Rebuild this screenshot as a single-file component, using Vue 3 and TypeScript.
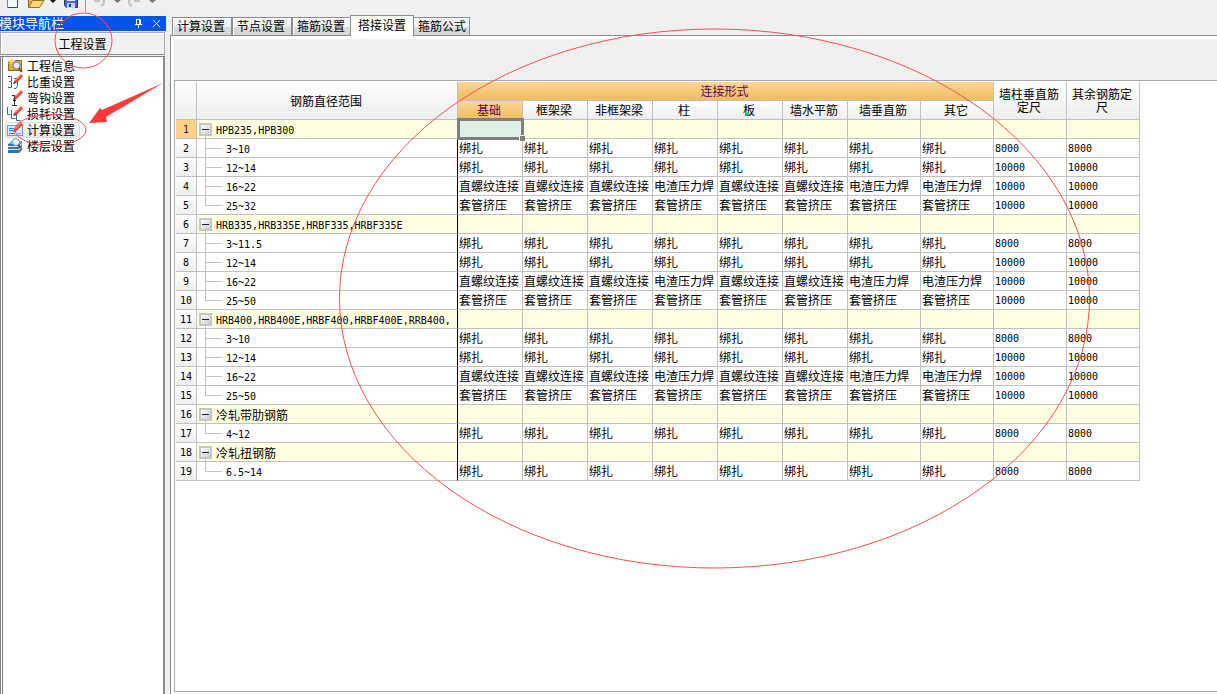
<script setup lang="ts">
import { ref } from 'vue'

interface GridRow {
  label: string
  group: boolean
  last?: boolean
  joints: string[]
  lengths: string[]
}

const modules = [
  { id: 'info', name: '工程信息' },
  { id: 'weight', name: '比重设置' },
  { id: 'hook', name: '弯钩设置' },
  { id: 'loss', name: '损耗设置' },
  { id: 'calc', name: '计算设置' },
  { id: 'floor', name: '楼层设置' },
]
const activeModule = ref('calc')

const tabs = ['计算设置', '节点设置', '箍筋设置', '搭接设置', '箍筋公式']
const activeTab = ref('搭接设置')

const jointColumns = ['基础', '框架梁', '非框架梁', '柱', '板', '墙水平筋', '墙垂直筋', '其它']

const T = '直螺纹连接'
const E = '电渣压力焊'
const lap = Array<string>(8).fill('绑扎')
const sleeve = Array<string>(8).fill('套管挤压')
const thread = [T, T, T, E, T, T, E, E]

const group = (label: string): GridRow => ({
  label,
  group: true,
  joints: Array<string>(8).fill(''),
  lengths: ['', ''],
})
const item = (label: string, joints: string[], length: string, last = false): GridRow => ({
  label,
  group: false,
  last,
  joints,
  lengths: [length, length],
})

const rows: GridRow[] = [
  group('HPB235,HPB300'),
  item('3~10', lap, '8000'),
  item('12~14', lap, '10000'),
  item('16~22', thread, '10000'),
  item('25~32', sleeve, '10000', true),
  group('HRB335,HRB335E,HRBF335,HRBF335E'),
  item('3~11.5', lap, '8000'),
  item('12~14', lap, '10000'),
  item('16~22', thread, '10000'),
  item('25~50', sleeve, '10000', true),
  group('HRB400,HRB400E,HRBF400,HRBF400E,RRB400,'),
  item('3~10', lap, '8000'),
  item('12~14', lap, '10000'),
  item('16~22', thread, '10000'),
  item('25~50', sleeve, '10000', true),
  group('冷轧带肋钢筋'),
  item('4~12', lap, '8000', true),
  group('冷轧扭钢筋'),
  item('6.5~14', lap, '8000', true),
]
</script>

<template>
  <div class="app">
    <header class="toolbar">
      <button class="tool" aria-label="新建">
        <svg width="20" height="9" viewBox="0 0 20 9">
          <path d="M7.500 -2V7.500H17.500V-2" fill="#f4f8fd" stroke="#6d86a6" />
          <path d="M17.500 0V7.500H8" fill="none" stroke="#2c4a73" />
        </svg>
      </button>
      <button class="tool" aria-label="打开">
        <svg width="38" height="9" viewBox="0 0 38 9">
          <path d="M8.500 7.500V-1H20V2" fill="#e8b64c" stroke="#94651a" />
          <path d="M8.500 7.500L12.500 0.500H24L19.500 7.500Z" fill="#ffd777" stroke="#9a6c1c" />
          <path d="M30 0H36L33 3Z" fill="#111" />
        </svg>
      </button>
      <button class="tool" aria-label="保存">
        <svg width="22" height="9" viewBox="0 0 22 9">
          <path d="M6.500 -2V5.500L8.500 7.500H19.500V-2" fill="#4468cf" stroke="#1d3491" />
          <rect x="9" y="-1" width="8" height="2" fill="#e8eefc" />
          <rect x="9" y="3" width="8" height="5" fill="#c9d4f3" />
          <rect x="11" y="4" width="2" height="3" fill="#1d3491" />
        </svg>
      </button>
      <span class="divider"></span>
      <button class="tool" aria-label="撤销">
        <svg width="38" height="8" viewBox="0 0 38 8">
          <path d="M8 1H14M16 -1C19 0 19 4 15 6" fill="none" stroke="#c4c4c4" stroke-width="2" />
          <path d="M28 0H35L31.500 3Z" fill="#777" />
        </svg>
      </button>
      <button class="tool" aria-label="恢复">
        <svg width="34" height="8" viewBox="0 0 34 8">
          <path d="M7 -1C4 0 4 4 8 6M10 1H16" fill="none" stroke="#c4c4c4" stroke-width="2" />
          <path d="M25 0H32L28.500 3Z" fill="#777" />
        </svg>
      </button>
    </header>

    <div class="body">
      <aside class="side">
        <div class="title">
          <span class="title-text">模块导航栏</span>
          <button class="title-btn" aria-label="固定">
            <svg width="9" height="9" viewBox="0 0 9 9">
              <path d="M2.500 5V0.500H6.500V5M5.500 0.500V5M1 5.500H8M4.500 6V9" fill="none" stroke="#fff" />
            </svg>
          </button>
          <button class="title-btn" aria-label="关闭">
            <svg width="9" height="9" viewBox="0 0 9 9">
              <path d="M1 1L8 8M8 1L1 8" fill="none" stroke="#fff" />
            </svg>
          </button>
        </div>
        <button class="section">工程设置</button>
        <nav class="modules">
          <button
            v-for="m in modules"
            :key="m.id"
            class="module"
            :class="{ active: m.id === activeModule }"
            @click="activeModule = m.id"
          >
            <svg class="module-icon" width="16" height="16" viewBox="0 0 16 16">
              <g v-if="m.id === 'info'">
                <path d="M1.500 3.500H7L8 2.500H14.500V12.500H1.500Z" fill="#d6b04a" stroke="#8a6a1c" />
                <path d="M4 0V7M0.500 3.500H7.500M1.500 1L6.500 6M6.500 1L1.500 6" stroke="#ffd21f" />
                <circle cx="9.500" cy="7.500" r="3.500" fill="#dcebfa" stroke="#6b7f99" />
                <path d="M12 10.500L15 14" stroke="#7a4c22" stroke-width="2" />
              </g>
              <g v-else-if="m.id === 'floor'">
                <path d="M1 6L4 3H15L12 6Z" fill="#7fb4e8" />
                <path
                  d="M1 6H12L15 3V5L12 8H1ZM1 9H12L15 6V8L12 11H1ZM1 12H12L15 9V12L12 15H1Z"
                  fill="#2f74b5"
                />
                <path d="M2 8.500H12L15 5.500M2 11.500H12L15 8.500" fill="none" stroke="#d8eafa" />
                <circle cx="9" cy="4" r="3.500" fill="#e6f1fb" stroke="#8697aa" />
                <path d="M11 7L14 10" stroke="#7a4c22" stroke-width="2" />
              </g>
              <g v-else>
                <path
                  v-if="m.id === 'weight'"
                  d="M1 2.500H4.500V13.500H1M2 7.500H4M7 4.500H10.500V12L9 14.500H7"
                  fill="none"
                  stroke="#3e6a9e"
                />
                <path
                  v-else-if="m.id === 'hook'"
                  d="M5 5.500H7.500V15M5 15.500H10M6 10.500H9"
                  fill="none"
                  stroke="#222"
                />
                <path
                  v-else-if="m.id === 'loss'"
                  d="M0.500 1V8.500H3.500M4.500 4V12.500H8.500M9.500 8V14.500H13.500"
                  fill="none"
                  stroke="#3e6a9e"
                />
                <template v-else>
                  <rect x="0.500" y="3.500" width="15" height="10" fill="#dceafd" stroke="#6f9bdc" />
                  <path d="M2 6.500H7M2 8.500H6M2 11.500H8" stroke="#3b78d8" />
                  <path d="M10 11.500H14" stroke="#7fa8e6" />
                </template>
                <path d="M7.500 6.500L14 0L16 2.500L9.500 9Z" fill="#ea4628" />
                <path d="M8.500 6.500L14.500 1" stroke="#ff9478" />
                <path d="M6 10L7.500 6.500L9.500 9Z" fill="#6a3020" />
              </g>
            </svg>
            <span class="module-name">{{ m.name }}</span>
          </button>
        </nav>
      </aside>

      <main class="main">
        <div class="tabs" role="tablist">
          <button
            v-for="t in tabs"
            :key="t"
            class="tab"
            :class="{ active: t === activeTab }"
            role="tab"
            :aria-selected="t === activeTab"
            @click="activeTab = t"
          >
            {{ t }}
          </button>
        </div>
        <section class="panel">
          <div class="strip"></div>
          <div class="grid-frame">
            <table class="grid">
              <colgroup>
                <col class="c-index" />
                <col class="c-name" />
                <col v-for="n in 6" :key="n" class="c-narrow" />
                <col v-for="n in 4" :key="n" class="c-wide" />
              </colgroup>
              <thead>
                <tr>
                  <th rowspan="2"></th>
                  <th rowspan="2">钢筋直径范围</th>
                  <th colspan="8" class="hot">连接形式</th>
                  <th rowspan="2" class="wrap">墙柱垂直筋定尺</th>
                  <th rowspan="2" class="wrap">其余钢筋定尺</th>
                </tr>
                <tr>
                  <th v-for="(c, i) in jointColumns" :key="c" :class="{ hot: i === 0 }">{{ c }}</th>
                </tr>
              </thead>
              <tbody>
                <tr v-for="(r, i) in rows" :key="i" :class="{ group: r.group }">
                  <th class="index" :class="{ current: i === 0 }" scope="row">{{ i + 1 }}</th>
                  <td class="name">
                    <div class="node">
                      <button v-if="r.group" class="toggle" aria-label="折叠"></button>
                      <span v-else class="branch" :class="{ last: r.last }"></span>
                      <span class="label">{{ r.label }}</span>
                    </div>
                  </td>
                  <td v-for="(j, k) in r.joints" :key="k" :class="{ selected: i === 0 && k === 0 }">{{ j }}</td>
                  <td v-for="(l, k) in r.lengths" :key="'l' + k" class="num">{{ l }}</td>
                </tr>
              </tbody>
            </table>
          </div>
        </section>
      </main>
    </div>

    <svg class="marks" width="1100" height="580" viewBox="0 0 1100 580" aria-hidden="true">
      <g fill="none" stroke="#f4504e">
        <ellipse cx="714.5" cy="298.5" rx="375" ry="269.5" />
        <ellipse cx="83.5" cy="40.500" rx="28.5" ry="27.500" />
        <ellipse cx="50.500" cy="130" rx="35.500" ry="15.500" />
      </g>
      <path d="M89 123L100 108L102 110L163 83L106 117L107 122Z" fill="#fe3b3a" />
    </svg>
  </div>
</template>

<style>
html,
body {
  overflow: hidden;
  background: #f0f0f0;
}
</style>

<style scoped>
.app {
  position: relative;
  display: flex;
  flex-direction: column;
  height: 100vh;
  overflow: hidden;
  background: #f0f0f0;
  color: #000;
  font: 12px/16px 'Liberation Sans', 'Noto Sans CJK SC', sans-serif;
}
.app * {
  box-sizing: border-box;
}
button {
  margin: 0;
  padding: 0;
  border: 0;
  background: none;
  color: inherit;
  font: inherit;
}
svg {
  display: block;
  flex: none;
}

.toolbar {
  display: flex;
  align-items: flex-start;
  flex: none;
  height: 14px;
}
.divider {
  width: 1px;
  height: 12px;
  margin-left: 5px;
  background: #999;
}

.body {
  display: flex;
  flex: 1;
  min-height: 0;
  gap: 4px;
}

.side {
  display: flex;
  flex-direction: column;
  flex: none;
  width: 166px;
  padding-top: 2px;
}
.title {
  display: flex;
  align-items: center;
  gap: 9px;
  height: 15px;
  padding-right: 5px;
  background: #0054e6;
  color: #fff;
  font-size: 13px;
}
.title-text {
  flex: 1;
  margin-left: -1px;
  white-space: nowrap;
}
.section {
  height: 23px;
  margin: 1px 1px 0 0;
  padding-top: 2px;
  border: 1px solid #a8a8a8;
  border-bottom-color: #8f8f8f;
  background: #f0f0f0;
  box-shadow: inset 1px 1px #fff;
}
.modules {
  display: flex;
  flex-direction: column;
  align-items: flex-start;
  flex: 1;
  margin: 1px 1px 0 0;
  padding: 1px 2px;
  border: 1px solid #7d7f86;
  border-left: 3px double #7d7f86;
  border-right: 2px solid #8b8b8f;
  border-bottom: 0;
  background: #fff;
}
.module {
  display: flex;
  align-items: center;
  gap: 4px;
  height: 16px;
  padding: 0 5px 0 2px;
  border-radius: 3px;
  white-space: nowrap;
}
.module-name {
  padding-top: 2px;
}
.module.active {
  background: linear-gradient(#fafafa, #e6e6e6);
  box-shadow: inset 0 0 0 1px #dadada;
}

.main {
  display: flex;
  flex-direction: column;
  flex: 1;
  min-width: 0;
  padding-top: 1px;
}
.tabs {
  display: flex;
  align-items: flex-end;
  height: 20px;
  padding-left: 2px;
}
.tab {
  height: 18px;
  padding: 1px 6px 0 4px;
  border: 1px solid #898c95;
  border-bottom: 0;
  background: linear-gradient(#f2f2f2 50%, #dedede 50%, #d4d4d4);
  box-shadow: inset 1px 1px #fcfcfc;
  white-space: nowrap;
}
.tab:last-child {
  padding: 1px 3px 0 5px;
}
.tab.active {
  position: relative;
  height: 21px;
  margin: 0 -2px -1px;
  padding: 0 7px 1px;
  background: #fff;
}
.panel {
  display: flex;
  flex-direction: column;
  flex: 1;
  min-height: 0;
  padding: 3px 0 2px 3px;
  border-top: 1px solid #898c95;
  border-left: 1px solid #898c95;
  background: #fff;
}
.strip {
  flex: none;
  height: 41px;
  background: #f0f0f0;
}
.grid-frame {
  flex: 1;
  min-height: 0;
  padding: 1px 0 0 1px;
  border: 1px solid #a9a9ad;
  border-right: 0;
  background: #fff;
}

.grid {
  width: 964px;
  table-layout: fixed;
  border-collapse: separate;
  border-spacing: 0;
}
.c-index {
  width: 21px;
}
.c-name {
  width: 261px;
}
.c-narrow {
  width: 65px;
}
.c-wide {
  width: 73px;
}
th,
td {
  height: 19px;
  padding: 2px 0 0;
  border-right: 1px solid #c0c0c0;
  border-bottom: 1px solid #c0c0c0;
  font-weight: normal;
  line-height: 16px;
  white-space: nowrap;
}
thead th {
  padding-right: 2px;
  background: linear-gradient(#fff, #ededed);
}
thead th.hot {
  background: linear-gradient(#fad697, #f0bd5c);
  color: #5a005a;
}
thead th.wrap {
  padding: 2px 6px 0 4px;
  line-height: 13px;
  white-space: normal;
}
td {
  padding-left: 1px;
}
.group td {
  background-color: #ffffe1;
}
.index,
.name,
.num {
  font-family: 'DejaVu Sans Mono', 'Noto Sans CJK SC', monospace;
  font-size: 10px;
}
.index {
  background: linear-gradient(#fff, #efefef);
}
.index.current {
  background: #ffd08a;
  color: #5a005a;
}
.name {
  padding: 0;
  border-right-color: #000;
}
.node {
  display: flex;
  align-items: center;
  gap: 4px;
  height: 18px;
}
.label {
  padding-top: 3px;
}
.group .node {
  padding-left: 2px;
  background: linear-gradient(#c0c0c0, #c0c0c0) 8px 100% / 1px 4px no-repeat;
}
.group:nth-child(n + 16) .label {
  font-size: 12px;
}
.toggle {
  width: 13px;
  height: 13px;
  border: 2px solid #c6c6c6;
  background:
    linear-gradient(#222, #222) center / 7px 1px no-repeat,
    linear-gradient(135deg, #fff, #c8ccd6);
}
.branch {
  width: 17px;
  height: 18px;
  margin-left: 8px;
  background:
    linear-gradient(#c0c0c0, #c0c0c0) 0 0 / 1px 100% no-repeat,
    linear-gradient(#c0c0c0, #c0c0c0) 0 9px / 100% 1px no-repeat;
}
.branch.last {
  background:
    linear-gradient(#c0c0c0, #c0c0c0) 0 0 / 1px 10px no-repeat,
    linear-gradient(#c0c0c0, #c0c0c0) 0 9px / 100% 1px no-repeat;
}
.group td.selected {
  position: relative;
  background: #dff0e6;
}
.selected::before {
  content: '';
  position: absolute;
  inset: -2px -2px -2px -1px;
  border: 3px solid #7f7f7f;
}
.selected::after {
  content: '';
  position: absolute;
  right: -3px;
  bottom: -3px;
  width: 5px;
  height: 5px;
  border: 1px solid #fff;
  border-width: 1px 0 0 1px;
  background: #7f7f7f;
}

.marks {
  position: absolute;
  top: 0;
  left: 0;
  pointer-events: none;
}
</style>
